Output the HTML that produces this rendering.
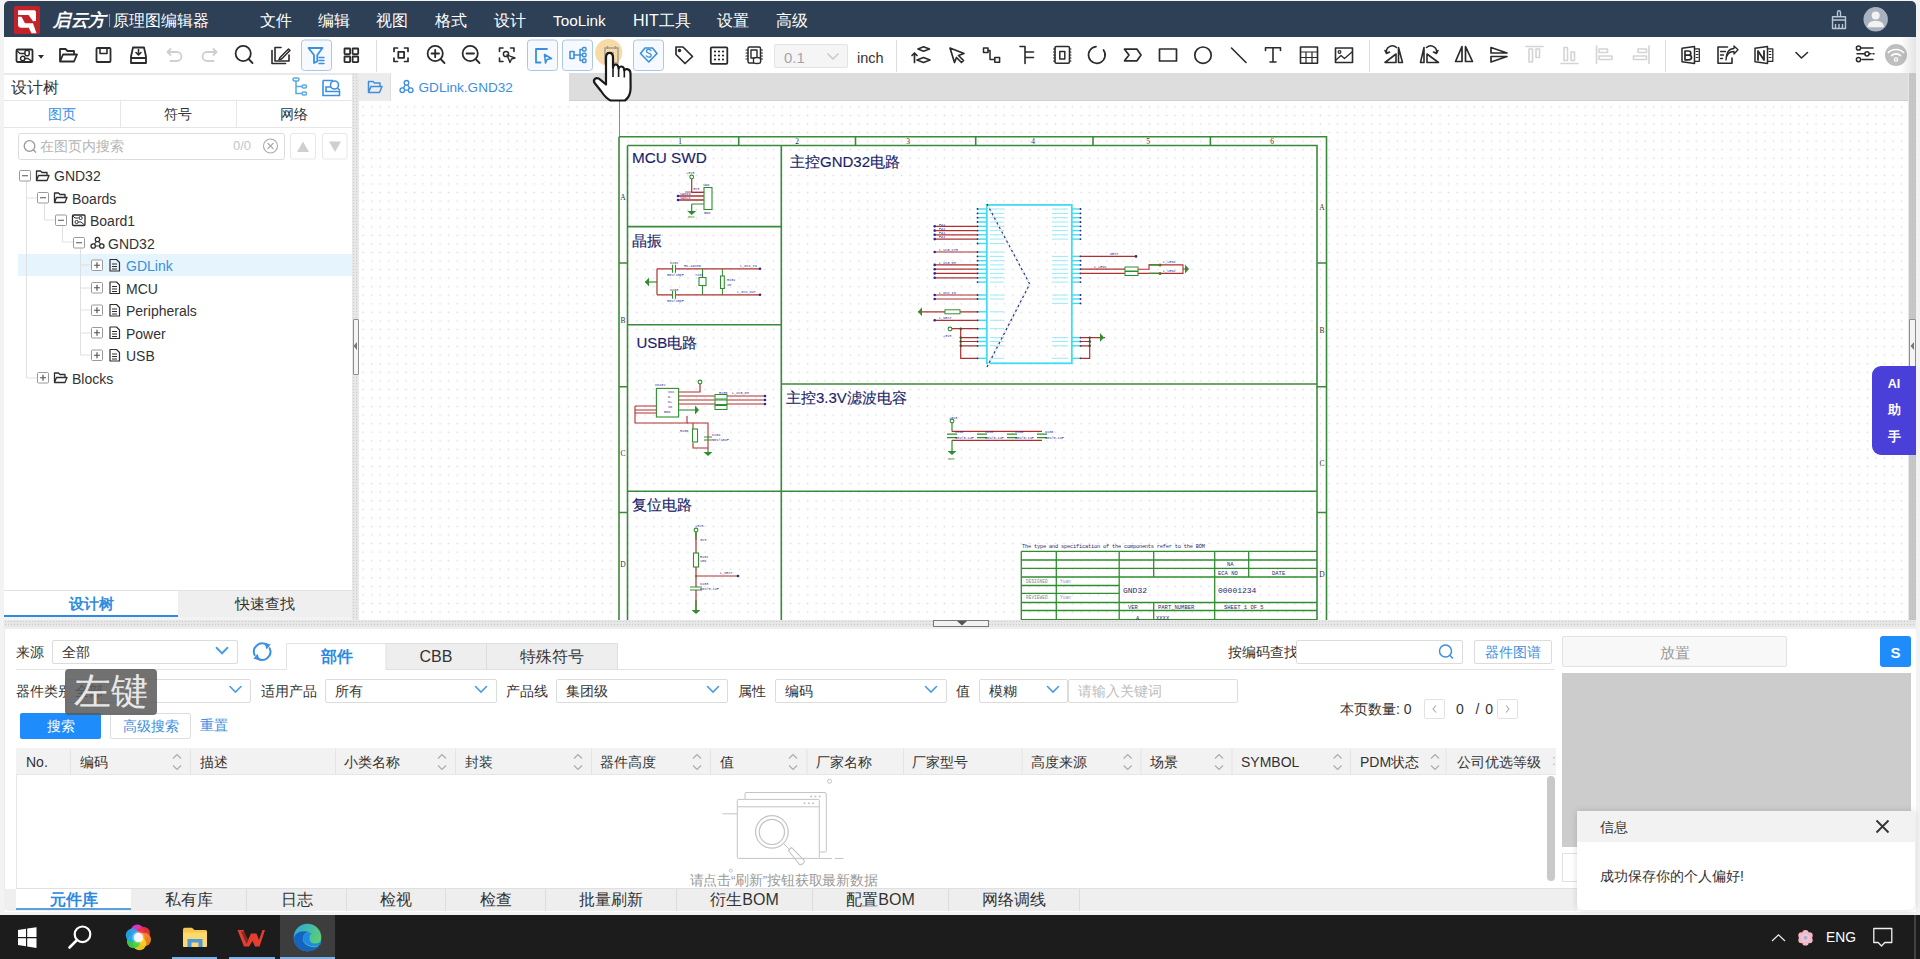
<!DOCTYPE html>
<html><head><meta charset="utf-8">
<style>
*{box-sizing:border-box;margin:0;padding:0}
html,body{width:1920px;height:959px;overflow:hidden;background:#f3f3f3;font-family:"Liberation Sans",sans-serif;color:#333;font-size:14px}
.a{position:absolute}
svg{display:block}
#hdr{left:4px;top:1px;width:1912px;height:36px;background:#2e4055;border-radius:5px 5px 0 0}
.menu{top:2px;height:36px;line-height:37px;color:#fff;font-size:16px;white-space:nowrap}
#tb{left:4px;top:37px;width:1912px;height:36px;background:#fff}
.ic{top:0;width:36px;height:36px}
.ic svg{position:absolute;left:8px;top:8px}
.sep{top:6px;width:1px;height:26px;background:#ddd}
.act{position:absolute;top:3px;width:30px;height:31px;border:1px solid #7fb2e5;border-radius:3px;background:#f4f9ff}
#lp{left:4px;top:73px;width:348px;height:544px;background:#fff}
.spl{background-color:#e7e7e7;background-image:radial-gradient(#cacaca 0.6px,transparent 0.95px);background-size:3px 3px}
#cv{left:359px;top:101px;width:1549px;height:519px;background-color:#fff;background-image:radial-gradient(circle,#dedede 0.7px,transparent 1.1px);background-size:8.56px 8.57px;background-position:-0.1px 1.6px;overflow:hidden}
#ctab{left:359px;top:73px;width:1549px;height:28px;background:#dddddd;border-bottom:1px solid #cfcfcf}
#bp{left:4px;top:628px;width:1912px;height:284px;background:#fff}
#task{left:0;top:915px;width:1920px;height:44px;background:#1c1c1c}
.t14{font-size:14px;white-space:nowrap}
.tree{font-size:14px;color:#333;white-space:nowrap;height:22px;line-height:22px}
.box{width:11px;height:11px;border:1px solid #888;background:#fff}
.dd{background:#fff;border:1px solid #dcdcdc;border-radius:2px;height:24px;line-height:22px;padding-left:9px;font-size:14px;color:#333}
.th{font-size:14px;color:#333;white-space:nowrap;line-height:29px;top:0}
.btab{top:0;height:22px;line-height:22px;text-align:center;font-size:16px;color:#333;background:#eee;border-right:1px solid #ddd}
</style></head><body>

<!-- HEADER -->
<div id="hdr" class="a"></div>
<svg class="a" style="left:0;top:0" width="50" height="40" viewBox="0 0 50 40">
<rect x="14" y="6" width="26" height="28" rx="1.5" fill="#c42228"/>
<path d="M18 10.3 H34.3 Q36 10.3 36 12.5 V21 L33 21.3 L28.5 15 H18 Z" fill="#fff"/>
<path d="M18 16.8 H21.5 L25 23.3 H33 L36.5 33.2 H31.5 L28.8 27.8 H21.5 Q18 27.8 18 24.5 Z" fill="#fff"/>
</svg>
<div class="a menu" style="left:53px;font-size:17.5px;font-style:italic;font-weight:bold;letter-spacing:-0.5px">启云方</div>
<div class="a" style="left:109px;top:13.5px;width:1px;height:13px;background:#8d99a8"></div>
<div class="a menu" style="left:113px;font-size:16px">原理图编辑器</div>
<div class="a menu" style="left:260px">文件</div>
<div class="a menu" style="left:318px">编辑</div>
<div class="a menu" style="left:376px">视图</div>
<div class="a menu" style="left:435px">格式</div>
<div class="a menu" style="left:494px">设计</div>
<div class="a menu" style="left:553px;font-size:15.3px">TooLink</div>
<div class="a menu" style="left:633px">HIT工具</div>
<div class="a menu" style="left:717px">设置</div>
<div class="a menu" style="left:776px">高级</div>


<!-- header right -->
<svg class="a" style="left:1825px;top:5px" width="70" height="30" viewBox="1825 5 70 30">
<g fill="none" stroke="#b9c6d6" stroke-width="1.4" stroke-linejoin="round">
<path d="M1837.5 16.5 V12.5 Q1837.5 10.8 1839 10.8 Q1840.5 10.8 1840.5 12.5 V16.5"/>
<path d="M1832.5 16.8 H1845.5 V20 H1832.5 Z"/>
<path d="M1832.5 20 V28.5 H1845.5 V20 M1835.5 24 V28.5 M1839 24 V28.5 M1842.5 24 V28.5"/>
</g>
<circle cx="1875.7" cy="19.3" r="12.2" fill="#a9b3bf"/>
<circle cx="1875.7" cy="15.5" r="4" fill="#f2f2f2"/>
<path d="M1867.3 27.3 Q1867.5 20.8 1875.7 20.8 Q1884 20.8 1884 27.3 Z" fill="#f2f2f2"/>
</svg>
<!-- TOOLBAR -->
<div id="tb" class="a"></div>
<svg class="a" style="left:0;top:0" width="1920" height="75" viewBox="0 0 1920 75">
<g fill="none" stroke="#2b2b2b" stroke-width="1.8" stroke-linejoin="round" stroke-linecap="round">
<!-- board -->
<rect x="16.5" y="49.5" width="16" height="12.5" rx="1.2"/>
<path d="M38 55 H44 L41 58.8 Z" fill="#2b2b2b" stroke="none"/>
<path d="M17 51 L20 53.5 H24.5 M25 53 A2.2 2.2 0 1 0 29.2 53 A2.2 2.2 0 1 0 25 53 M20.5 58.5 A2.2 2.2 0 1 0 24.9 58.5 A2.2 2.2 0 1 0 20.5 58.5 M25 58.5 H28 L32 61.5" stroke-width="1.5"/>
<!-- folder -->
<path d="M60 61.5 V49 H65.5 L67.5 51 H74 V54 M60 61.5 L63 54.5 H77 L74 61.5 Z"/>
<!-- save -->
<rect x="96.5" y="48" width="14" height="14" rx="1"/>
<path d="M100 48.5 V53.5 H107 V48.5" stroke-width="1.6"/>
<!-- save to -->
<path d="M133 47.5 H144 L146 56.5 V63 H131 V56.5 Z M131 58 H146"/>
<path d="M138.5 49.5 V54.5 M136 52.5 L138.5 55 L141 52.5" stroke-width="1.6"/>
<!-- undo/redo -->
<path d="M167.5 52 H177 A4.5 4.5 0 0 1 177 61 H170.5 M170.5 49 L167.5 52 L170.5 55" stroke="#cfcfcf"/>
<path d="M216.5 52 H207 A4.5 4.5 0 0 0 207 61 H213.5 M213.5 49 L216.5 52 L213.5 55" stroke="#cfcfcf"/>
<!-- search -->
<circle cx="243.2" cy="53.5" r="7.6"/><path d="M248.6 59 L252.5 63"/>
<!-- edit -->
<path d="M272 50.5 V63.5 H285.5" stroke-width="1.6"/>
<path d="M281 47.5 H275 V61 H289 V55" stroke-width="1.6"/>
<path d="M280 57.5 L288.5 49 L290 50.5 L281.5 59 L279 59.5 Z" stroke-width="1.5"/>
<!-- grid -->
<rect x="344.5" y="48.5" width="5.6" height="5.6" rx=".5"/><rect x="352.6" y="48.5" width="5.6" height="5.6" rx=".5"/>
<rect x="344.5" y="56.5" width="5.6" height="5.6" rx=".5"/><rect x="352.6" y="56.5" width="5.6" height="5.6" rx=".5"/>
<!-- fit -->
<path d="M394 51.5 V48 H397.5 M404.5 48 H408 V51.5 M408 58 V61.5 H404.5 M397.5 61.5 H394 V58" stroke-width="1.7"/>
<rect x="398.3" y="51.8" width="5.8" height="6"/>
<!-- zoom in -->
<circle cx="435.2" cy="53.5" r="7.6"/><path d="M440.6 59 L444.5 63 M431.5 53.5 H439 M435.2 49.8 V57.2"/>
<!-- zoom out -->
<circle cx="470.2" cy="53.5" r="7.6"/><path d="M475.6 59 L479.5 63 M466.5 53.5 H474"/>
<!-- zoom select -->
<path d="M499.5 51.5 V48 H503 M510.5 48 H514 V51.5 M499.5 58 V61.5 H503" stroke-width="1.6"/>
<circle cx="506" cy="54" r="2.6" stroke-width="1.5"/><path d="M507 55 L515 58 L511.5 59 L510 62.5 Z" stroke-width="1.4"/>
<!-- tag -->
<path d="M676 47 H683 L692.5 56.5 L685 63.5 L676 54.5 Z" stroke-width="1.7"/><circle cx="679.5" cy="50.5" r=".9" fill="#2b2b2b"/>
<!-- dots grid -->
<rect x="710.8" y="47.3" width="16.5" height="16.5" rx="1"/>
<g fill="#2b2b2b" stroke="none"><circle cx="715" cy="51.5" r="1.1"/><circle cx="719" cy="51.5" r="1.1"/><circle cx="723" cy="51.5" r="1.1"/><circle cx="715" cy="55.5" r="1.1"/><circle cx="719" cy="55.5" r="1.1"/><circle cx="723" cy="55.5" r="1.1"/><circle cx="715" cy="59.5" r="1.1"/><circle cx="719" cy="59.5" r="1.1"/><circle cx="723" cy="59.5" r="1.1"/></g>
<!-- chip db -->
<rect x="748" y="47" width="12.5" height="16" rx="1.5" stroke-width="1.5"/>
<path d="M746 50 H748 M746 53 H748 M746 56 H748 M746 59 H748 M760.5 50 H762.5 M760.5 53 H762.5 M760.5 56 H762.5 M760.5 59 H762.5" stroke-width="1.2"/>
<rect x="751" y="50" width="6" height="8" stroke-width="1.4"/>
<ellipse cx="757" cy="59" rx="3.5" ry="1.5" fill="#fff" stroke-width="1.3"/><path d="M753.5 59 V62 A3.5 1.5 0 0 0 760.5 62 V59" fill="#fff" stroke-width="1.3"/>
<!-- layers -->
<path d="M914.5 62.5 V53 M912 55.5 L914.5 53 L917 55.5" stroke-width="1.7"/>
<path d="M918 49 L923.5 46.8 L929.5 49 L923.5 51.2 Z M917 60 L923.5 57.5 L930 60 L923.5 62.5 Z" stroke-width="1.7"/>
<!-- arrow -->
<path d="M950 48 L964 53.5 L958.5 55.5 L963.5 60.5 L961.5 62.5 L956.5 57.5 L954.5 62.5 Z" stroke-width="1.7"/>
<!-- wire -->
<rect x="983.5" y="48" width="4.5" height="4.5" stroke-width="1.5"/><rect x="994.8" y="57.5" width="4.8" height="4.8" stroke-width="1.5"/>
<path d="M988 50.5 H990 V59.5 H994.5" stroke-width="1.5"/>
<!-- bus entry -->
<path d="M1020 46.5 H1025 V63.5 M1025 52 H1033.5 M1025 57.5 H1033.5" stroke-width="1.6"/>
<!-- chip -->
<rect x="1055" y="46.5" width="14.5" height="16.8" rx="1.5" stroke-width="1.6"/>
<rect x="1059.8" y="51.5" width="5" height="7.5" stroke-width="1.5"/>
<path d="M1053.5 49 H1055 M1053.5 52 H1055 M1053.5 55 H1055 M1053.5 58 H1055 M1053.5 61 H1055 M1069.5 49 H1071 M1069.5 52 H1071 M1069.5 55 H1071 M1069.5 58 H1071 M1069.5 61 H1071" stroke-width="1.1"/>
<!-- arc -->
<path d="M1103.5 50 A8.3 8.3 0 1 1 1096 46.7" stroke-width="1.7"/>
<!-- net port -->
<path d="M1124.5 49.2 H1137 L1141 55 L1137 60.8 H1124.5 L1129 55 Z" stroke-width="1.7"/>
<!-- rect -->
<rect x="1159.5" y="49" width="17" height="12" stroke-width="1.7"/>
<!-- circle -->
<circle cx="1203" cy="55.2" r="8.2" stroke-width="1.7"/>
<!-- line -->
<path d="M1231.5 48 L1246 62.5" stroke-width="1.6"/>
<!-- T -->
<path d="M1265.5 50.5 V47.8 H1280.5 V50.5 M1273 47.8 V62 M1270 62 H1276" stroke-width="1.6"/>
<!-- table -->
<rect x="1300.5" y="47" width="17" height="16.3" stroke-width="1.6"/>
<path d="M1300.5 52 H1317.5 M1300.5 57.5 H1317.5 M1306 52 V63.3 M1312 52 V63.3" stroke-width="1.2"/>
<!-- image -->
<rect x="1335.5" y="48" width="17" height="14.5" stroke-width="1.6"/>
<circle cx="1339.5" cy="52" r="1.4" stroke-width="1.2"/><path d="M1336 60 L1341 55.5 L1344.5 58.5 L1352 52" stroke-width="1.3"/>
<!-- rotate L -->
<path d="M1385 62.5 L1396 54 V62.5 Z M1398.5 47.5 L1402.5 62.5 H1398.5 Z" stroke-width="1.6"/>
<path d="M1396.5 47.5 A6 6 0 0 0 1386.5 53 M1385 50.5 L1386.5 53.5 L1389.5 52" stroke-width="1.6"/>
<!-- rotate R -->
<path d="M1424 47.5 L1420.5 62.5 H1424 Z M1427 54 L1438.5 62.5 H1427 Z" stroke-width="1.6"/>
<path d="M1426.5 47.5 A6 6 0 0 1 1436.5 53 M1438 50.5 L1436.5 53.5 L1433.5 52" stroke-width="1.6"/>
<!-- flip H -->
<path d="M1462 46.5 L1455.5 61.5 H1462 Z M1465.5 46.5 L1472.5 61.5 H1465.5 Z" stroke-width="1.7"/>
<!-- flip V -->
<path d="M1491 47.5 L1507 53 H1491 Z M1491 56.5 H1507 L1491 62 Z" stroke-width="1.7"/>
<!-- disabled aligns -->
<g stroke="#d4d4d4" stroke-width="1.6">
<path d="M1526 46.5 H1543"/><rect x="1529" y="49" width="3.5" height="13"/><rect x="1536" y="49" width="3.5" height="8.5"/>
<path d="M1561 63.5 H1578"/><rect x="1564" y="47.5" width="3.5" height="13"/><rect x="1571" y="52" width="3.5" height="8.5"/>
<path d="M1596.5 46 V63.5"/><rect x="1599" y="49" width="8.5" height="3.5"/><rect x="1599" y="56" width="13" height="3.5"/>
<path d="M1649 46 V63.5"/><rect x="1638" y="49" width="8.5" height="3.5"/><rect x="1633.5" y="56" width="13" height="3.5"/>
</g>
<!-- B book -->
<path d="M1682 48.3 L1694.5 46.5 V63.5 L1682 61.8 Z" stroke-width="1.5"/><path d="M1694.5 48.8 H1699.3 V61.3 H1694.5" stroke-width="1.3"/>
<path d="M1696.2 51.5 H1698 M1696.2 54.5 H1698 M1696.2 57.5 H1698" stroke-width="1"/>
<path d="M1685 51 H1688.5 Q1690.8 51 1690.8 53.2 Q1690.8 55.2 1688.5 55.2 H1685 M1688.5 55.2 Q1691.5 55.2 1691.5 57.5 Q1691.5 59.8 1688.5 59.8 H1685 V51" stroke-width="1.7"/>
<!-- export -->
<path d="M1727.5 47 H1718 V63.3 H1732 V58" stroke-width="1.6"/><path d="M1720.5 51.5 H1725.5 M1720.5 55 H1723.5 M1720.5 58.5 H1722.5" stroke-width="1.4"/>
<path d="M1726 60 C1726.5 54 1729.5 51.5 1734 51.5 V54 L1738 49.8 L1734 46 V48.5 C1729.5 48.5 1726.3 52.5 1726 60" stroke-width="1.3"/>
<!-- N book -->
<path d="M1755 48.3 L1767.5 46.5 V63.5 L1755 61.8 Z" stroke-width="1.5"/><path d="M1767.5 48.8 H1772.8 V61.3 H1767.5" stroke-width="1.3"/>
<path d="M1769.2 51.5 H1771 M1769.2 54.5 H1771 M1769.2 57.5 H1771" stroke-width="1"/>
<path d="M1758 60 V51 L1764 60 V51" stroke-width="1.8"/>
<!-- chevron -->
<path d="M1796 52.5 L1801.5 58 L1807.5 52.5" stroke-width="1.6"/>
<!-- sliders -->
<path d="M1860.5 48 H1873 M1857 53.8 H1871 M1862 59.6 H1873 M1873 53.8 H1874" stroke-width="1.5"/>
<circle cx="1858.5" cy="48" r="2.1" fill="#fff" stroke-width="1.5"/><circle cx="1867" cy="53.8" r="2.1" fill="#fff" stroke-width="1.5"/><circle cx="1858.5" cy="59.6" r="2.1" fill="#fff" stroke-width="1.5"/>
</g>
<!-- separators -->
<g fill="#dedede"><rect x="376" y="40" width="1" height="32"/><rect x="896" y="40" width="1" height="32"/><rect x="1369" y="40" width="1" height="32"/><rect x="1665" y="40" width="1" height="32"/></g>
<!-- bold letters in books -->

<!-- active boxes -->
<g fill="#f6faff" stroke="#a9c7e8" stroke-width="1">
<rect x="301.5" y="40" width="30" height="30.5" rx="3"/>
<rect x="527.5" y="40" width="30" height="30.5" rx="3"/>
<rect x="562.5" y="40" width="30" height="30.5" rx="3"/>
<rect x="633.5" y="40" width="30" height="30.5" rx="3"/>
</g>
<g fill="none" stroke="#3a8fde" stroke-width="1.8" stroke-linejoin="round" stroke-linecap="round">
<path d="M308.5 48 H322.5 L317.3 55 V61.5 L314 63 V55 Z"/>
<path d="M319 57.5 H324 M319 60.5 H324 M319 63.5 H324" stroke-width="1.4"/>
<path d="M547 49 H536 V62.5 H540.5" />
<path d="M544.5 54.5 L551.5 58.5 L547 59.5 L545.5 63 Z" stroke-width="1.6"/>
<rect x="570" y="51.5" width="4" height="7" stroke-width="1.6"/>
<path d="M574 55 H580 M580 49.5 V60.5 M580 49.5 H582.5 M580 55 H582.5 M580 60.5 H582.5" stroke-width="1.5"/>
<rect x="582.5" y="47.5" width="3.5" height="3.5" rx="1" stroke-width="1.4"/><rect x="582.5" y="53.3" width="3.5" height="3.5" rx="1" stroke-width="1.4"/><rect x="582.5" y="59" width="3.5" height="3.5" rx="1" stroke-width="1.4"/>
<path d="M640.5 53.5 L645 48 H652.5 L657 53.5 L648.8 62 Z" stroke-width="1.6"/>
</g>
<path d="M651 50.6 Q650.3 49.4 648.7 49.4 Q646.5 49.4 646.5 51.2 Q646.5 52.6 648.7 53.1 Q651.2 53.7 651.2 55.3 Q651.2 57.2 648.8 57.2 Q646.9 57.2 646.3 55.8" fill="none" stroke="#3a8fde" stroke-width="1.3" stroke-linecap="round"/>
<!-- yellow highlight -->
<circle cx="608.7" cy="52.5" r="13.6" fill="#f6d69c" opacity="0.9"/>
<g fill="none" stroke="#9b9b9b" stroke-width="1.4"><rect x="605" y="48" width="13" height="15"/><path d="M607.5 46 V49 M615.5 46 V49 M609 53 H614 M609 56 H614 M609 59 H614"/></g>
<!-- wifi circle -->
<circle cx="1896" cy="55" r="11" fill="#bfbfbf"/>
<g fill="none" stroke="#fff" stroke-width="1.6"><path d="M1888 53 A11 11 0 0 1 1904 53"/><path d="M1891 56 A7 7 0 0 1 1901 56"/></g><circle cx="1896" cy="59.5" r="1.6" fill="none" stroke="#fff" stroke-width="1.2"/>
</svg>
<!-- dropdown 0.1 -->
<div class="a" style="left:774px;top:44px;width:74px;height:24px;background:#f5f5f5;border:1px solid #e3e3e3;border-radius:2px"></div>
<div class="a" style="left:784px;top:46.5px;font-size:15px;line-height:22px;color:#a5a5a5">0.1</div>
<svg class="a" style="left:826px;top:52px" width="14" height="10"><path d="M1.5 1.5 L7 7 L12.5 1.5" fill="none" stroke="#c8c8c8" stroke-width="1.4"/></svg>
<div class="a" style="left:857px;top:47.5px;font-size:14.5px;line-height:20px;color:#333">inch</div>


<!-- LEFT PANEL -->
<div id="lp" class="a"></div>
<div class="a spl" style="left:352px;top:73px;width:7px;height:547px"></div>
<div class="a" style="left:4px;top:73px;width:348px;height:1.5px;background:#e9e9e9"></div>
<div class="a" style="left:11px;top:74.5px;font-size:16px;line-height:26px;color:#333">设计树</div>
<div class="a" style="left:4px;top:100px;width:348px;height:1px;background:#e6e6e6"></div>
<div class="a" style="left:4px;top:127px;width:348px;height:1px;background:#e6e6e6"></div>
<div class="a" style="left:120px;top:101px;width:1px;height:26px;background:#e6e6e6"></div>
<div class="a" style="left:236px;top:101px;width:1px;height:26px;background:#e6e6e6"></div>
<div class="a" style="left:4px;top:101px;width:116px;text-align:center;font-size:14px;line-height:26px;color:#3a8ee6">图页</div>
<div class="a" style="left:120px;top:101px;width:116px;text-align:center;font-size:14px;line-height:26px;color:#333">符号</div>
<div class="a" style="left:236px;top:101px;width:116px;text-align:center;font-size:14px;line-height:26px;color:#333">网络</div>
<svg class="a" style="left:0;top:70px" width="352" height="100" viewBox="0 70 352 100">
<g fill="none" stroke="#5aaae0" stroke-width="1.5">
<path d="M296 81 V93.5 H302 M296 86.5 H302"/>
<rect x="293" y="78" width="6" height="3" rx="1.5"/><rect x="302" y="85" width="4.5" height="3" rx="1.5"/><rect x="302" y="92" width="4.5" height="3" rx="1.5"/>
</g>
<g fill="none" stroke="#3e8fe0" stroke-width="1.6">
<path d="M323 80.5 H333 M323 80.5 V95.5 H339.5 V91.5 H326 V87 H331"/>
<circle cx="334.5" cy="85" r="4"/><path d="M337.5 88 L340 90.5"/>
</g>
<rect x="18.5" y="133.5" width="266" height="26" rx="2" fill="#fff" stroke="#dcdcdc"/>
<rect x="290.5" y="133.5" width="25" height="25.5" rx="2" fill="#fff" stroke="#e6e6e6"/>
<rect x="322.5" y="133.5" width="24.5" height="25.5" rx="2" fill="#fff" stroke="#e6e6e6"/>
<path d="M297 152 L303 141.5 L309 152 Z" fill="#cfcfcf"/>
<path d="M329 141.5 H341 L335 152 Z" fill="#cfcfcf"/>
<g fill="none" stroke="#999" stroke-width="1.3"><circle cx="29.5" cy="146" r="5.3"/><path d="M33.3 149.8 L36 152.5"/></g>
<g fill="none" stroke="#aaa" stroke-width="1.1"><circle cx="270.5" cy="146" r="7"/><path d="M267.5 143 L273.5 149 M273.5 143 L267.5 149"/></g>
</svg>
<div class="a" style="left:40px;top:134px;font-size:14px;line-height:24px;color:#b5b5b5">在图页内搜索</div>
<div class="a" style="left:233px;top:134px;font-size:13px;line-height:24px;color:#c5c5c5">0/0</div>
<!-- tree -->
<div class="a" style="left:18px;top:254px;width:334px;height:22px;background:#e6f4fd"></div>
<svg class="a" style="left:0;top:160px" width="352" height="230" viewBox="0 160 352 230">
<g fill="none" stroke="#e0e0e0" stroke-width="1">
<path d="M26.5 181 V378 H37 M26.5 198 H37 M44.5 204 V220 H55 M62.5 226 V242 H73 M80.5 249 V355 H91 M80.5 265 H91 M80.5 288 H91 M80.5 310 H91 M80.5 333 H91"/>
</g>
<g fill="#fff" stroke="#9a9a9a" stroke-width="1">
<rect x="19.5" y="170.5" width="11" height="10.5" rx="1"/>
<rect x="37.5" y="192.5" width="11" height="10.5" rx="1"/>
<rect x="55.5" y="215" width="11" height="10.5" rx="1"/>
<rect x="73.5" y="237.5" width="11" height="10.5" rx="1"/>
<rect x="91.5" y="260" width="11" height="10.5" rx="1"/>
<rect x="91.5" y="282.5" width="11" height="10.5" rx="1"/>
<rect x="91.5" y="305" width="11" height="10.5" rx="1"/>
<rect x="91.5" y="327.5" width="11" height="10.5" rx="1"/>
<rect x="91.5" y="350" width="11" height="10.5" rx="1"/>
<rect x="37.5" y="372.5" width="11" height="10.5" rx="1"/>
</g>
<g fill="none" stroke="#555" stroke-width="1.2">
<path d="M22 175.75 H28 M40 197.75 H46 M58 220.25 H64 M76 242.75 H82"/>
<path d="M94 265.25 H100 M97 262.25 V268.25 M94 287.75 H100 M97 284.75 V290.75 M94 310.25 H100 M97 307.25 V313.25 M94 332.75 H100 M97 329.75 V335.75 M94 355.25 H100 M97 352.25 V358.25 M40 377.75 H46 M43 374.75 V380.75"/>
</g>
<g fill="none" stroke="#2e2e2e" stroke-width="1.3" stroke-linejoin="round">
<path d="M36.5 180.5 V171 H40.5 L42 172.5 H47 V175 M36.5 180.5 L38.5 175.5 H49 L47 180.5 Z"/>
<path d="M54.5 202.5 V193 H58.5 L60 194.5 H65 V197 M54.5 202.5 L56.5 197.5 H67 L65 202.5 Z"/>
<path d="M54.5 382.5 V373 H58.5 L60 374.5 H65 V377 M54.5 382.5 L56.5 377.5 H67 L65 382.5 Z"/>
<rect x="72.5" y="215" width="12.5" height="10.5" rx="1"/>
<path d="M73 216 L75 218 H78.5 M79 218 A1.6 1.6 0 1 0 82.2 218 A1.6 1.6 0 1 0 79 218 M75 222 A1.6 1.6 0 1 0 78.2 222 A1.6 1.6 0 1 0 75 222 M78.2 222 H81 L84.5 225" stroke-width="1"/>
<circle cx="97.5" cy="239.5" r="2.2"/><circle cx="93.2" cy="246" r="2.2"/><circle cx="101.8" cy="246" r="2.2"/>
<path d="M96.5 241.5 L94.5 244 M98.5 241.5 L100.5 244 M95.4 246 H99.6" stroke-width="1.1"/>
</g>
<g fill="none" stroke="#2e2e2e" stroke-width="1.2" stroke-linejoin="round">
<path d="M110 259.5 H116.5 L119.5 262.5 V271 H110 Z M112 264 H117 M112 266.5 H117 M112 269 H117"/>
<path d="M110 282 H116.5 L119.5 285 V293.5 H110 Z M112 286.5 H117 M112 289 H117 M112 291.5 H117"/>
<path d="M110 304.5 H116.5 L119.5 307.5 V316 H110 Z M112 309 H117 M112 311.5 H117 M112 314 H117"/>
<path d="M110 327 H116.5 L119.5 330 V338.5 H110 Z M112 331.5 H117 M112 334 H117 M112 336.5 H117"/>
<path d="M110 349.5 H116.5 L119.5 352.5 V361 H110 Z M112 354 H117 M112 356.5 H117 M112 359 H117"/>
</g>
</svg>
<div class="a tree" style="left:54px;top:165px">GND32</div>
<div class="a tree" style="left:72px;top:187.5px">Boards</div>
<div class="a tree" style="left:90px;top:210px">Board1</div>
<div class="a tree" style="left:108px;top:232.5px">GND32</div>
<div class="a tree" style="left:126px;top:255px;color:#3b8fd9">GDLink</div>
<div class="a tree" style="left:126px;top:277.5px">MCU</div>
<div class="a tree" style="left:126px;top:300px">Peripherals</div>
<div class="a tree" style="left:126px;top:322.5px">Power</div>
<div class="a tree" style="left:126px;top:345px">USB</div>
<div class="a tree" style="left:72px;top:367.5px">Blocks</div>
<!-- left bottom tabs -->
<div class="a" style="left:4px;top:590px;width:348px;height:1px;background:#e2e2e2"></div>
<div class="a" style="left:178px;top:591px;width:174px;height:26px;background:#efefef"></div>
<div class="a" style="left:4px;top:591px;width:174px;text-align:center;font-size:15px;line-height:25px;color:#2f8be0;font-weight:bold">设计树</div>
<div class="a" style="left:178px;top:591px;width:174px;text-align:center;font-size:15px;line-height:25px;color:#333">快速查找</div>
<div class="a" style="left:4px;top:614.5px;width:174px;height:2.5px;background:#2f8be0"></div>
<!-- vertical splitter handle -->
<div class="a" style="left:352.5px;top:318.5px;width:6.5px;height:56.5px;background:#f4f4f4;border:1px solid #8c8c8c;border-radius:1px"></div>
<svg class="a" style="left:352px;top:340px" width="7" height="12"><path d="M5 2 L1.5 6 L5 10 Z" fill="#777"/></svg>


<!-- CANVAS -->
<div id="ctab" class="a"></div>
<div id="cv" class="a"></div>

<div class="a" style="left:359px;top:73px;width:31px;height:28px;background:#ececec"></div>
<div class="a" style="left:390px;top:73px;width:179px;height:28px;background:#fff;border-left:1px solid #e0e0e0"></div>
<svg class="a" style="left:359px;top:73px" width="210" height="28" viewBox="359 73 210 28">
<path d="M368.5 92.5 V81.5 H373 L374.5 83 H380 V86 M368.5 92.5 L371 86.5 H382 L379.5 92.5 Z" fill="none" stroke="#3d8ee0" stroke-width="1.5" stroke-linejoin="round"/>
<g fill="none" stroke="#3d8ee0" stroke-width="1.3"><circle cx="406.5" cy="82.8" r="2.3"/><circle cx="402.3" cy="90.2" r="2.3"/><circle cx="410.7" cy="90.2" r="2.3"/><path d="M405.4 84.8 L403.4 88.2 M407.6 84.8 L409.6 88.2 M404.6 90.2 H408.4"/></g>
</svg>
<div class="a" style="left:418.5px;top:74.5px;font-size:13.6px;line-height:26px;color:#3d8ee0">GDLink.GND32</div>
<svg class="a" style="left:359px;top:101px" width="1549" height="519" viewBox="359 101 1549 519">
<path d="M619.5 101 V136.5" stroke="#8c8c8c" stroke-width="1"/>
<g fill="none" stroke="#3b8a3b" stroke-width="1.6">
<path d="M619 136.7 H1326.5 V640 M619 136.7 V640"/>
<path d="M627.5 145.5 H1317 V640 M627.5 145.5 V640"/>
<path d="M738.7 136.7 V145.5"/>
<path d="M855.5 136.7 V145.5"/>
<path d="M975.7 136.7 V145.5"/>
<path d="M1093 136.7 V145.5"/>
<path d="M1210.4 136.7 V145.5"/>
<path d="M619 263 H627.5 M1317 263 H1326.5"/>
<path d="M619 386.8 H627.5 M1317 386.8 H1326.5"/>
<path d="M619 512.5 H627.5 M1317 512.5 H1326.5"/>
<path d="M781.3 145.5 V640 M627.5 226.6 H781.3 M627.5 324.8 H781.3 M627.5 491.3 H1317 M781.3 384 H1317"/>
</g>
<text x="680" y="144" font-family="Liberation Serif" font-size="7.5" fill="#333" text-anchor="middle">1</text>
<text x="797" y="144" font-family="Liberation Serif" font-size="7.5" fill="#333" text-anchor="middle">2</text>
<text x="908" y="144" font-family="Liberation Serif" font-size="7.5" fill="#333" text-anchor="middle">3</text>
<text x="1033" y="144" font-family="Liberation Serif" font-size="7.5" fill="#333" text-anchor="middle">4</text>
<text x="1148" y="144" font-family="Liberation Serif" font-size="7.5" fill="#333" text-anchor="middle">5</text>
<text x="1272" y="144" font-family="Liberation Serif" font-size="7.5" fill="#333" text-anchor="middle">6</text>
<text x="623" y="200" font-family="Liberation Serif" font-size="7.5" fill="#333" text-anchor="middle">A</text>
<text x="1322" y="210" font-family="Liberation Serif" font-size="7.5" fill="#333" text-anchor="middle">A</text>
<text x="623" y="323" font-family="Liberation Serif" font-size="7.5" fill="#333" text-anchor="middle">B</text>
<text x="1322" y="333" font-family="Liberation Serif" font-size="7.5" fill="#333" text-anchor="middle">B</text>
<text x="623" y="456" font-family="Liberation Serif" font-size="7.5" fill="#333" text-anchor="middle">C</text>
<text x="1322" y="466" font-family="Liberation Serif" font-size="7.5" fill="#333" text-anchor="middle">C</text>
<text x="623" y="567" font-family="Liberation Serif" font-size="7.5" fill="#333" text-anchor="middle">D</text>
<text x="1322" y="577" font-family="Liberation Serif" font-size="7.5" fill="#333" text-anchor="middle">D</text>
<text x="632" y="163.3" font-family="Liberation Sans" fill="#1b1f6b" stroke="#1b1f6b" stroke-width="0.15" font-size="15.3">MCU SWD</text>
<text x="632" y="245.5" font-family="Liberation Sans" fill="#1b1f6b" stroke="#1b1f6b" stroke-width="0.15" font-size="15">晶振</text>
<text x="636.5" y="347.5" font-family="Liberation Sans" fill="#1b1f6b" stroke="#1b1f6b" stroke-width="0.15" font-size="15">USB电路</text>
<text x="631.5" y="510" font-family="Liberation Sans" fill="#1b1f6b" stroke="#1b1f6b" stroke-width="0.15" font-size="15">复位电路</text>
<text x="790" y="167" font-family="Liberation Sans" fill="#1b1f6b" stroke="#1b1f6b" stroke-width="0.15" font-size="15">主控GND32电路</text>
<text x="786" y="402.5" font-family="Liberation Sans" fill="#1b1f6b" stroke="#1b1f6b" stroke-width="0.15" font-size="15">主控3.3V滤波电容</text>
</svg>
<div class="a" style="left:1900px;top:37px;width:16px;height:36px;background:linear-gradient(to right,rgba(0,0,0,0),rgba(0,0,0,0.11))"></div>
<div class="a" style="left:1907.5px;top:73px;width:8.5px;height:547px;background-color:#c9c9c9;background-image:radial-gradient(#b9b9b9 0.6px,transparent 0.9px);background-size:2.5px 2.5px;border-left:1.5px solid #e6e6e6"></div>
<div class="a spl" style="left:4px;top:620px;width:1912px;height:8px"></div>

<!-- BOTTOM PANEL -->
<svg class="a" style="left:359px;top:101px" width="1549" height="519" viewBox="359 101 1549 519">
<circle cx="691.7" cy="177" r="1.9" fill="#fff" stroke="#2f8f2f" stroke-width="1.1"/>
<path d="M691.7 179 V192.5 H704" fill="none" stroke="#b03030" stroke-width="1.2"/>
<path d="M678 196 H704 M678 200 H704" fill="none" stroke="#b03030" stroke-width="1.3"/>
<path d="M685 192 H704" fill="none" stroke="#b03030" stroke-width="0.8"/>
<circle cx="678" cy="196" r="1.3" fill="#2a2a9a"/>
<circle cx="678" cy="200" r="1.3" fill="#2a2a9a"/>
<path d="M691.7 204 H704 M691.7 204 V211" fill="none" stroke="#2f8f2f" stroke-width="1.2"/>
<path d="M687.2 211 H696.2 L691.7 215 Z" fill="#2f8f2f"/>
<rect x="704" y="187.5" width="8" height="22" fill="none" stroke="#2f8f2f" stroke-width="1.1"/>
<text x="686" y="174" font-family="Liberation Mono" font-size="3.5" fill="#2a2a9a">+3V3</text>
<text x="703" y="186" font-family="Liberation Mono" font-size="3.5" fill="#2a2a9a">SWD</text>
<text x="704" y="214" font-family="Liberation Mono" font-size="3.5" fill="#2a2a9a">GND</text>
<text x="688" y="218" font-family="Liberation Mono" font-size="3.5" fill="#2f8f2f">GND</text>
<text x="693" y="190" font-family="Liberation Mono" font-size="3.5" fill="#2a2a9a">3V3</text>
<text x="680" y="195" font-family="Liberation Mono" font-size="3.5" fill="#2a2a9a">SWDIO</text>
<text x="680" y="199" font-family="Liberation Mono" font-size="3.5" fill="#2a2a9a">SWCLK</text>
<path d="M657 268.8 H760 M657 294.8 H760 M657 268.8 V294.8" fill="none" stroke="#b03030" stroke-width="1.2"/>
<path d="M645 282 H657" fill="none" stroke="#2f8f2f" stroke-width="1.2"/>
<path d="M649 277.5 V286.5 L645 282 Z" fill="#2f8f2f"/>
<rect x="672" y="264.8" width="4" height="8" fill="#fff"/>
<path d="M672.5 264.8 V272.8 M675.5 264.8 V272.8" fill="none" stroke="#2f8f2f" stroke-width="1.1"/>
<rect x="672" y="290.8" width="4" height="8" fill="#fff"/>
<path d="M672.5 290.8 V298.8 M675.5 290.8 V298.8" fill="none" stroke="#2f8f2f" stroke-width="1.1"/>
<rect x="699" y="277.5" width="7" height="8" fill="#fff" stroke="#2f8f2f" stroke-width="1.1"/>
<path d="M702.5 268.8 V277.5 M702.5 285.5 V294.8" fill="none" stroke="#2f8f2f" stroke-width="1"/>
<rect x="720.5" y="276" width="3.8" height="12.5" fill="#fff" stroke="#2f8f2f" stroke-width="1.1"/>
<path d="M722.4 268.8 V276 M722.4 288.5 V294.8" fill="none" stroke="#2f8f2f" stroke-width="1"/>
<circle cx="760" cy="268.8" r="1.3" fill="#2a2a9a"/>
<circle cx="760" cy="294.8" r="1.3" fill="#2a2a9a"/>
<text x="670" y="264" font-family="Liberation Mono" font-size="3.5" fill="#2a2a9a">C102</text>
<text x="684" y="266.5" font-family="Liberation Mono" font-size="3.5" fill="#2a2a9a">HC-49SMD</text>
<text x="740" y="266.5" font-family="Liberation Mono" font-size="3.5" fill="#2a2a9a">L_OSC_IN</text>
<text x="667" y="276" font-family="Liberation Mono" font-size="3.5" fill="#2a2a9a">50V/20pF</text>
<text x="695" y="276" font-family="Liberation Mono" font-size="3.5" fill="#2a2a9a">Y101</text>
<text x="727" y="281" font-family="Liberation Mono" font-size="3.5" fill="#2a2a9a">R101</text>
<text x="727" y="286" font-family="Liberation Mono" font-size="3.5" fill="#2a2a9a">1M</text>
<text x="670" y="291" font-family="Liberation Mono" font-size="3.5" fill="#2a2a9a">C103</text>
<text x="667" y="302" font-family="Liberation Mono" font-size="3.5" fill="#2a2a9a">50V/20pF</text>
<text x="737" y="293" font-family="Liberation Mono" font-size="3.5" fill="#2a2a9a">L_OSC_OUT</text>
<rect x="656.4" y="388.4" width="22.2" height="28.6" fill="#fff" stroke="#2f8f2f" stroke-width="1.1"/>
<text x="655" y="386" font-family="Liberation Mono" font-size="3.5" fill="#2a2a9a">CN102</text>
<text x="668" y="393" font-family="Liberation Mono" font-size="3.5" fill="#2a2a9a">VCC</text>
<text x="668" y="398" font-family="Liberation Mono" font-size="3.5" fill="#2a2a9a">D-</text>
<text x="668" y="403" font-family="Liberation Mono" font-size="3.5" fill="#2a2a9a">D+</text>
<text x="668" y="408" font-family="Liberation Mono" font-size="3.5" fill="#2a2a9a">ID</text>
<text x="664" y="413" font-family="Liberation Mono" font-size="3.5" fill="#2a2a9a">GND</text>
<circle cx="700" cy="382" r="1.9" fill="#fff" stroke="#2f8f2f" stroke-width="1.1"/>
<path d="M700 384 V392 H678.6" fill="none" stroke="#b03030" stroke-width="1.2"/>
<path d="M678.6 396 H715 M678.6 400 H715 M678.6 404 H715" fill="none" stroke="#b03030" stroke-width="1.2"/>
<rect x="715" y="394.5" width="12" height="4.5" fill="#fff" stroke="#2f8f2f" stroke-width="1"/>
<rect x="715" y="400" width="12" height="4.5" fill="#fff" stroke="#2f8f2f" stroke-width="1"/>
<rect x="715" y="405.5" width="12" height="4" fill="#fff" stroke="#2f8f2f" stroke-width="1"/>
<path d="M727 396 H765 M727 400 H765 M727 404 H765" fill="none" stroke="#b03030" stroke-width="1.2"/>
<circle cx="765" cy="396" r="1.3" fill="#2a2a9a"/>
<circle cx="765" cy="400" r="1.3" fill="#2a2a9a"/>
<circle cx="765" cy="404" r="1.3" fill="#2a2a9a"/>
<path d="M635 406 H656.4 M635 410 H656.4 M635 413 H656.4" fill="none" stroke="#b03030" stroke-width="1"/>
<path d="M635 406 V423 H687 V416" fill="none" stroke="#b03030" stroke-width="1.1"/>
<path d="M678.6 410 H695" fill="none" stroke="#2f8f2f" stroke-width="1.1"/>
<path d="M695 405.5 V414.5 L699 410 Z" fill="#2f8f2f"/>
<path d="M687 423 H708 V450 M693 423 V430 M693 443 V448 H708" fill="none" stroke="#b03030" stroke-width="1.1"/>
<rect x="692.5" y="429" width="5" height="13" fill="#fff" stroke="#2f8f2f" stroke-width="1.1"/>
<path d="M704 437 H712 M704 440 H712" fill="none" stroke="#2f8f2f" stroke-width="1.1"/>
<path d="M708 450 V452" fill="none" stroke="#2f8f2f" stroke-width="1.2"/>
<path d="M703.5 452 H712.5 L708 456 Z" fill="#2f8f2f"/>
<text x="719" y="394" font-family="Liberation Mono" font-size="3.5" fill="#2a2a9a">R105</text>
<text x="732" y="394" font-family="Liberation Mono" font-size="3.5" fill="#2a2a9a">L_USB_DM</text>
<text x="680" y="432" font-family="Liberation Mono" font-size="3.5" fill="#2a2a9a">R106</text>
<text x="712" y="436" font-family="Liberation Mono" font-size="3.5" fill="#2a2a9a">C104</text>
<text x="712" y="441" font-family="Liberation Mono" font-size="3.5" fill="#2a2a9a">50V/10uF</text>
<circle cx="696" cy="530" r="1.9" fill="#fff" stroke="#2f8f2f" stroke-width="1.1"/>
<path d="M696 532 V553" fill="none" stroke="#b03030" stroke-width="1.2"/>
<path d="M696 532 V540" fill="none" stroke="#2f8f2f" stroke-width="1.2"/>
<rect x="693.5" y="553" width="5" height="14" fill="#fff" stroke="#2f8f2f" stroke-width="1.1"/>
<path d="M696 567 V587" fill="none" stroke="#b03030" stroke-width="1.2"/>
<path d="M696 576 H738" fill="none" stroke="#b03030" stroke-width="1.2"/>
<circle cx="738" cy="576" r="1.3" fill="#2a2a9a"/>
<circle cx="696" cy="576" r="1.1" fill="#2f8f2f"/>
<path d="M690 587 H702 M690 590 H702" fill="none" stroke="#2f8f2f" stroke-width="1.1"/>
<path d="M696 590 V610" fill="none" stroke="#b03030" stroke-width="1.2"/>
<path d="M696 600 V610" fill="none" stroke="#2f8f2f" stroke-width="1.2"/>
<path d="M691.5 610 H700.5 L696 614 Z" fill="#2f8f2f"/>
<text x="695" y="527" font-family="Liberation Mono" font-size="3.5" fill="#2a2a9a">+3V3</text>
<text x="700" y="541" font-family="Liberation Mono" font-size="3.5" fill="#2a2a9a">3V3</text>
<text x="700" y="558" font-family="Liberation Mono" font-size="3.5" fill="#2a2a9a">R102</text>
<text x="700" y="562" font-family="Liberation Mono" font-size="3.5" fill="#2a2a9a">10K</text>
<text x="720" y="574" font-family="Liberation Mono" font-size="3.5" fill="#2a2a9a">L_NRST</text>
<text x="700" y="585" font-family="Liberation Mono" font-size="3.5" fill="#2a2a9a">C103</text>
<text x="700" y="590" font-family="Liberation Mono" font-size="3.5" fill="#2a2a9a">50V/0.1uF</text>
<rect x="986.8" y="204.9" width="85" height="158.4" fill="none" stroke="#41dcef" stroke-width="1.8"/>
<path d="M977 209.0 H987" fill="none" stroke="#41dcef" stroke-width="1.4"/>
<path d="M977 213.4 H987" fill="none" stroke="#41dcef" stroke-width="1.4"/>
<path d="M977 217.7 H987" fill="none" stroke="#41dcef" stroke-width="1.4"/>
<path d="M977 222.0 H987" fill="none" stroke="#41dcef" stroke-width="1.4"/>
<path d="M977 226.3 H987" fill="none" stroke="#41dcef" stroke-width="1.4"/>
<path d="M977 230.6 H987" fill="none" stroke="#41dcef" stroke-width="1.4"/>
<path d="M977 234.8 H987" fill="none" stroke="#41dcef" stroke-width="1.4"/>
<path d="M977 239.1 H987" fill="none" stroke="#41dcef" stroke-width="1.4"/>
<path d="M977 243.5 H987" fill="none" stroke="#41dcef" stroke-width="1.4"/>
<path d="M977 252.0 H987" fill="none" stroke="#41dcef" stroke-width="1.4"/>
<path d="M977 256.4 H987" fill="none" stroke="#41dcef" stroke-width="1.4"/>
<path d="M977 260.7 H987" fill="none" stroke="#41dcef" stroke-width="1.4"/>
<path d="M977 264.9 H987" fill="none" stroke="#41dcef" stroke-width="1.4"/>
<path d="M977 269.2 H987" fill="none" stroke="#41dcef" stroke-width="1.4"/>
<path d="M977 273.4 H987" fill="none" stroke="#41dcef" stroke-width="1.4"/>
<path d="M977 277.8 H987" fill="none" stroke="#41dcef" stroke-width="1.4"/>
<path d="M977 282.1 H987" fill="none" stroke="#41dcef" stroke-width="1.4"/>
<path d="M977 295.0 H987" fill="none" stroke="#41dcef" stroke-width="1.4"/>
<path d="M977 299.0 H987" fill="none" stroke="#41dcef" stroke-width="1.4"/>
<path d="M977 311.8 H987" fill="none" stroke="#41dcef" stroke-width="1.4"/>
<path d="M977 320.3 H987" fill="none" stroke="#41dcef" stroke-width="1.4"/>
<path d="M977 328.7 H987" fill="none" stroke="#41dcef" stroke-width="1.4"/>
<path d="M977 337.6 H987" fill="none" stroke="#41dcef" stroke-width="1.4"/>
<path d="M977 341.5 H987" fill="none" stroke="#41dcef" stroke-width="1.4"/>
<path d="M977 345.8 H987" fill="none" stroke="#41dcef" stroke-width="1.4"/>
<path d="M977 358.3 H987" fill="none" stroke="#41dcef" stroke-width="1.4"/>
<path d="M1072 209 H1080.5" fill="none" stroke="#41dcef" stroke-width="1.4"/>
<path d="M1072 213.4 H1080.5" fill="none" stroke="#41dcef" stroke-width="1.4"/>
<path d="M1072 217.7 H1080.5" fill="none" stroke="#41dcef" stroke-width="1.4"/>
<path d="M1072 222 H1080.5" fill="none" stroke="#41dcef" stroke-width="1.4"/>
<path d="M1072 226.3 H1080.5" fill="none" stroke="#41dcef" stroke-width="1.4"/>
<path d="M1072 230.6 H1080.5" fill="none" stroke="#41dcef" stroke-width="1.4"/>
<path d="M1072 234.8 H1080.5" fill="none" stroke="#41dcef" stroke-width="1.4"/>
<path d="M1072 239.1 H1080.5" fill="none" stroke="#41dcef" stroke-width="1.4"/>
<path d="M1072 256.4 H1080.5" fill="none" stroke="#41dcef" stroke-width="1.4"/>
<path d="M1072 260.7 H1080.5" fill="none" stroke="#41dcef" stroke-width="1.4"/>
<path d="M1072 264.9 H1080.5" fill="none" stroke="#41dcef" stroke-width="1.4"/>
<path d="M1072 269.2 H1080.5" fill="none" stroke="#41dcef" stroke-width="1.4"/>
<path d="M1072 273.4 H1080.5" fill="none" stroke="#41dcef" stroke-width="1.4"/>
<path d="M1072 277.8 H1080.5" fill="none" stroke="#41dcef" stroke-width="1.4"/>
<path d="M1072 282.1 H1080.5" fill="none" stroke="#41dcef" stroke-width="1.4"/>
<path d="M1072 295 H1080.5" fill="none" stroke="#41dcef" stroke-width="1.4"/>
<path d="M1072 299 H1080.5" fill="none" stroke="#41dcef" stroke-width="1.4"/>
<path d="M1072 303.4 H1080.5" fill="none" stroke="#41dcef" stroke-width="1.4"/>
<path d="M1072 337.6 H1080.5" fill="none" stroke="#41dcef" stroke-width="1.4"/>
<path d="M1072 341.5 H1080.5" fill="none" stroke="#41dcef" stroke-width="1.4"/>
<path d="M1072 345.8 H1080.5" fill="none" stroke="#41dcef" stroke-width="1.4"/>
<path d="M1072 358.3 H1080.5" fill="none" stroke="#41dcef" stroke-width="1.4"/>
<path d="M990 209.0 H1004" fill="none" stroke="#9beaf5" stroke-width="1.0"/>
<path d="M990 213.4 H1004" fill="none" stroke="#9beaf5" stroke-width="1.0"/>
<path d="M990 217.7 H1004" fill="none" stroke="#9beaf5" stroke-width="1.0"/>
<path d="M990 222.0 H1004" fill="none" stroke="#9beaf5" stroke-width="1.0"/>
<path d="M990 226.3 H1004" fill="none" stroke="#9beaf5" stroke-width="1.0"/>
<path d="M990 230.6 H1004" fill="none" stroke="#9beaf5" stroke-width="1.0"/>
<path d="M990 234.8 H1004" fill="none" stroke="#9beaf5" stroke-width="1.0"/>
<path d="M990 239.1 H1004" fill="none" stroke="#9beaf5" stroke-width="1.0"/>
<path d="M990 243.5 H1004" fill="none" stroke="#9beaf5" stroke-width="1.0"/>
<path d="M990 252.0 H1004" fill="none" stroke="#9beaf5" stroke-width="1.0"/>
<path d="M990 256.4 H1004" fill="none" stroke="#9beaf5" stroke-width="1.0"/>
<path d="M990 260.7 H1004" fill="none" stroke="#9beaf5" stroke-width="1.0"/>
<path d="M990 264.9 H1004" fill="none" stroke="#9beaf5" stroke-width="1.0"/>
<path d="M990 269.2 H1004" fill="none" stroke="#9beaf5" stroke-width="1.0"/>
<path d="M990 273.4 H1004" fill="none" stroke="#9beaf5" stroke-width="1.0"/>
<path d="M990 277.8 H1004" fill="none" stroke="#9beaf5" stroke-width="1.0"/>
<path d="M990 282.1 H1004" fill="none" stroke="#9beaf5" stroke-width="1.0"/>
<path d="M990 295.0 H1004" fill="none" stroke="#9beaf5" stroke-width="1.0"/>
<path d="M990 299.0 H1004" fill="none" stroke="#9beaf5" stroke-width="1.0"/>
<path d="M990 311.8 H1004" fill="none" stroke="#9beaf5" stroke-width="1.0"/>
<path d="M990 320.3 H1004" fill="none" stroke="#9beaf5" stroke-width="1.0"/>
<path d="M990 328.7 H1004" fill="none" stroke="#9beaf5" stroke-width="1.0"/>
<path d="M990 337.6 H1004" fill="none" stroke="#9beaf5" stroke-width="1.0"/>
<path d="M990 341.5 H1004" fill="none" stroke="#9beaf5" stroke-width="1.0"/>
<path d="M990 345.8 H1004" fill="none" stroke="#9beaf5" stroke-width="1.0"/>
<path d="M990 358.3 H1004" fill="none" stroke="#9beaf5" stroke-width="1.0"/>
<path d="M1052 209 H1068" fill="none" stroke="#9beaf5" stroke-width="1.0"/>
<path d="M1052 213.4 H1068" fill="none" stroke="#9beaf5" stroke-width="1.0"/>
<path d="M1052 217.7 H1068" fill="none" stroke="#9beaf5" stroke-width="1.0"/>
<path d="M1052 222 H1068" fill="none" stroke="#9beaf5" stroke-width="1.0"/>
<path d="M1052 226.3 H1068" fill="none" stroke="#9beaf5" stroke-width="1.0"/>
<path d="M1052 230.6 H1068" fill="none" stroke="#9beaf5" stroke-width="1.0"/>
<path d="M1052 234.8 H1068" fill="none" stroke="#9beaf5" stroke-width="1.0"/>
<path d="M1052 239.1 H1068" fill="none" stroke="#9beaf5" stroke-width="1.0"/>
<path d="M1052 256.4 H1068" fill="none" stroke="#9beaf5" stroke-width="1.0"/>
<path d="M1052 260.7 H1068" fill="none" stroke="#9beaf5" stroke-width="1.0"/>
<path d="M1052 264.9 H1068" fill="none" stroke="#9beaf5" stroke-width="1.0"/>
<path d="M1052 269.2 H1068" fill="none" stroke="#9beaf5" stroke-width="1.0"/>
<path d="M1052 273.4 H1068" fill="none" stroke="#9beaf5" stroke-width="1.0"/>
<path d="M1052 277.8 H1068" fill="none" stroke="#9beaf5" stroke-width="1.0"/>
<path d="M1052 282.1 H1068" fill="none" stroke="#9beaf5" stroke-width="1.0"/>
<path d="M1052 295 H1068" fill="none" stroke="#9beaf5" stroke-width="1.0"/>
<path d="M1052 299 H1068" fill="none" stroke="#9beaf5" stroke-width="1.0"/>
<path d="M1052 303.4 H1068" fill="none" stroke="#9beaf5" stroke-width="1.0"/>
<path d="M1052 337.6 H1068" fill="none" stroke="#9beaf5" stroke-width="1.0"/>
<path d="M1052 341.5 H1068" fill="none" stroke="#9beaf5" stroke-width="1.0"/>
<path d="M1052 345.8 H1068" fill="none" stroke="#9beaf5" stroke-width="1.0"/>
<path d="M1052 358.3 H1068" fill="none" stroke="#9beaf5" stroke-width="1.0"/>
<path d="M987 204 L1029.7 284 L987 367" fill="none" stroke="#2a3a8a" stroke-width="1.3"/>
<circle cx="977.5" cy="209.0" r="0.9" fill="#26268a"/><circle cx="977.5" cy="213.4" r="0.9" fill="#26268a"/><circle cx="977.5" cy="217.7" r="0.9" fill="#26268a"/><circle cx="977.5" cy="222.0" r="0.9" fill="#26268a"/><circle cx="977.5" cy="226.3" r="0.9" fill="#26268a"/><circle cx="977.5" cy="230.6" r="0.9" fill="#26268a"/><circle cx="977.5" cy="234.8" r="0.9" fill="#26268a"/><circle cx="977.5" cy="239.1" r="0.9" fill="#26268a"/><circle cx="977.5" cy="243.5" r="0.9" fill="#26268a"/><circle cx="977.5" cy="252.0" r="0.9" fill="#26268a"/><circle cx="977.5" cy="256.4" r="0.9" fill="#26268a"/><circle cx="977.5" cy="260.7" r="0.9" fill="#26268a"/><circle cx="977.5" cy="264.9" r="0.9" fill="#26268a"/><circle cx="977.5" cy="269.2" r="0.9" fill="#26268a"/><circle cx="977.5" cy="273.4" r="0.9" fill="#26268a"/><circle cx="977.5" cy="277.8" r="0.9" fill="#26268a"/><circle cx="977.5" cy="282.1" r="0.9" fill="#26268a"/><circle cx="977.5" cy="295.0" r="0.9" fill="#26268a"/><circle cx="977.5" cy="299.0" r="0.9" fill="#26268a"/><circle cx="977.5" cy="311.8" r="0.9" fill="#26268a"/><circle cx="977.5" cy="320.3" r="0.9" fill="#26268a"/><circle cx="977.5" cy="328.7" r="0.9" fill="#26268a"/><circle cx="977.5" cy="337.6" r="0.9" fill="#26268a"/><circle cx="977.5" cy="341.5" r="0.9" fill="#26268a"/><circle cx="977.5" cy="345.8" r="0.9" fill="#26268a"/><circle cx="977.5" cy="358.3" r="0.9" fill="#26268a"/><circle cx="1080.5" cy="209" r="0.9" fill="#26268a"/><circle cx="1080.5" cy="213.4" r="0.9" fill="#26268a"/><circle cx="1080.5" cy="217.7" r="0.9" fill="#26268a"/><circle cx="1080.5" cy="222" r="0.9" fill="#26268a"/><circle cx="1080.5" cy="226.3" r="0.9" fill="#26268a"/><circle cx="1080.5" cy="230.6" r="0.9" fill="#26268a"/><circle cx="1080.5" cy="234.8" r="0.9" fill="#26268a"/><circle cx="1080.5" cy="239.1" r="0.9" fill="#26268a"/><circle cx="1080.5" cy="256.4" r="0.9" fill="#26268a"/><circle cx="1080.5" cy="260.7" r="0.9" fill="#26268a"/><circle cx="1080.5" cy="264.9" r="0.9" fill="#26268a"/><circle cx="1080.5" cy="269.2" r="0.9" fill="#26268a"/><circle cx="1080.5" cy="273.4" r="0.9" fill="#26268a"/><circle cx="1080.5" cy="277.8" r="0.9" fill="#26268a"/><circle cx="1080.5" cy="282.1" r="0.9" fill="#26268a"/><circle cx="1080.5" cy="295" r="0.9" fill="#26268a"/><circle cx="1080.5" cy="299" r="0.9" fill="#26268a"/><circle cx="1080.5" cy="303.4" r="0.9" fill="#26268a"/><circle cx="1080.5" cy="337.6" r="0.9" fill="#26268a"/><circle cx="1080.5" cy="341.5" r="0.9" fill="#26268a"/><circle cx="1080.5" cy="345.8" r="0.9" fill="#26268a"/><circle cx="1080.5" cy="358.3" r="0.9" fill="#26268a"/><path d="M987 204 L1029.7 284 L987 367" fill="none" stroke="#fff" stroke-width="1.5" stroke-dasharray="3 2.2" stroke-dashoffset="3"/>
<path d="M934.7 226.3 H977" fill="none" stroke="#b03030" stroke-width="1.2"/>
<circle cx="934.7" cy="226.3" r="1.3" fill="#2a2a9a"/>
<path d="M934.7 230.6 H977" fill="none" stroke="#b03030" stroke-width="1.2"/>
<circle cx="934.7" cy="230.6" r="1.3" fill="#2a2a9a"/>
<path d="M934.7 234.8 H977" fill="none" stroke="#b03030" stroke-width="1.2"/>
<circle cx="934.7" cy="234.8" r="1.3" fill="#2a2a9a"/>
<path d="M934.7 239.1 H977" fill="none" stroke="#b03030" stroke-width="1.2"/>
<circle cx="934.7" cy="239.1" r="1.3" fill="#2a2a9a"/>
<path d="M934.7 252.0 H977" fill="none" stroke="#b03030" stroke-width="1.2"/>
<circle cx="934.7" cy="252.0" r="1.3" fill="#2a2a9a"/>
<path d="M934.7 264.9 H977" fill="none" stroke="#b03030" stroke-width="1.2"/>
<circle cx="934.7" cy="264.9" r="1.3" fill="#2a2a9a"/>
<path d="M934.7 269.2 H977" fill="none" stroke="#b03030" stroke-width="1.2"/>
<circle cx="934.7" cy="269.2" r="1.3" fill="#2a2a9a"/>
<path d="M934.7 273.4 H977" fill="none" stroke="#b03030" stroke-width="1.2"/>
<circle cx="934.7" cy="273.4" r="1.3" fill="#2a2a9a"/>
<path d="M934.7 277.8 H977" fill="none" stroke="#b03030" stroke-width="1.2"/>
<circle cx="934.7" cy="277.8" r="1.3" fill="#2a2a9a"/>
<path d="M934.7 295.0 H977" fill="none" stroke="#b03030" stroke-width="1.2"/>
<circle cx="934.7" cy="295.0" r="1.3" fill="#2a2a9a"/>
<path d="M934.7 299.0 H977" fill="none" stroke="#b03030" stroke-width="1.2"/>
<circle cx="934.7" cy="299.0" r="1.3" fill="#2a2a9a"/>
<path d="M934.7 320.3 H977" fill="none" stroke="#b03030" stroke-width="1.2"/>
<circle cx="934.7" cy="320.3" r="1.3" fill="#2a2a9a"/>
<text x="939" y="225.5" font-family="Liberation Mono" font-size="3.5" fill="#2a2a9a">PA1</text>
<text x="939" y="229.79999999999998" font-family="Liberation Mono" font-size="3.5" fill="#2a2a9a">PA1</text>
<text x="939" y="234.0" font-family="Liberation Mono" font-size="3.5" fill="#2a2a9a">PA1</text>
<text x="939" y="238.29999999999998" font-family="Liberation Mono" font-size="3.5" fill="#2a2a9a">PA1</text>
<text x="939" y="251" font-family="Liberation Mono" font-size="3.5" fill="#2a2a9a">L_USB_CTR</text>
<text x="939" y="264" font-family="Liberation Mono" font-size="3.5" fill="#2a2a9a">L_USB_DM</text>
<text x="939" y="294" font-family="Liberation Mono" font-size="3.5" fill="#2a2a9a">L_OSC_IN</text>
<text x="939" y="319" font-family="Liberation Mono" font-size="3.5" fill="#2a2a9a">L_NRST</text>
<path d="M918 311.8 H977" fill="none" stroke="#b03030" stroke-width="1.2"/>
<path d="M922 307.3 V316.3 L918 311.8 Z" fill="#2f8f2f"/>
<rect x="945" y="309.8" width="15" height="4" fill="#fff" stroke="#2f8f2f" stroke-width="1"/>
<circle cx="950" cy="329" r="1.9" fill="#fff" stroke="#2f8f2f" stroke-width="1.1"/>
<path d="M952 328.7 H977 M960.7 328.7 V358.3 H977 M960.7 337.6 H977 M960.7 341.5 H977 M960.7 345.8 H977" fill="none" stroke="#b03030" stroke-width="1.2"/>
<circle cx="960.7" cy="328.7" r="1.2" fill="#2a5a2a"/>
<circle cx="960.7" cy="337.6" r="1.2" fill="#2a5a2a"/>
<circle cx="960.7" cy="341.5" r="1.2" fill="#2a5a2a"/>
<circle cx="960.7" cy="345.8" r="1.2" fill="#2a5a2a"/>
<text x="943" y="337" font-family="Liberation Mono" font-size="3.5" fill="#2a2a9a">+3V3</text>
<path d="M1080.5 256.4 H1136" fill="none" stroke="#b03030" stroke-width="1.2"/>
<circle cx="1136" cy="256.4" r="1.3" fill="#2a2a9a"/>
<text x="1110" y="254.5" font-family="Liberation Mono" font-size="3.5" fill="#2a2a9a">NRST</text>
<path d="M1080.5 269.2 H1125 M1080.5 273.4 H1125" fill="none" stroke="#b03030" stroke-width="1.2"/>
<rect x="1125" y="267" width="13" height="4" fill="#fff" stroke="#2f8f2f" stroke-width="1"/>
<rect x="1125" y="271.5" width="13" height="4" fill="#fff" stroke="#2f8f2f" stroke-width="1"/>
<path d="M1138 269.2 H1149 V264.9 H1160 M1138 273.4 H1160" fill="none" stroke="#b03030" stroke-width="1.1"/>
<path d="M1149 264.9 H1160 M1149 273.4 H1160" fill="none" stroke="#2f8f2f" stroke-width="1.1"/>
<circle cx="1160" cy="264.9" r="1.5" fill="#2f8f2f"/>
<circle cx="1160" cy="273.4" r="1.5" fill="#2f8f2f"/>
<path d="M1160 264.9 H1183 V273.4 H1160 M1183 269 H1185" fill="none" stroke="#b03030" stroke-width="1.1"/>
<path d="M1185 264.5 V273.5 L1189 269 Z" fill="#2f8f2f"/>
<text x="1094" y="268" font-family="Liberation Mono" font-size="3.5" fill="#2a2a9a">L_LED1</text>
<text x="1163" y="263" font-family="Liberation Mono" font-size="3.5" fill="#2a2a9a">L_LED1</text>
<text x="1163" y="272" font-family="Liberation Mono" font-size="3.5" fill="#2a2a9a">L_LED2</text>
<path d="M1080.5 337.6 H1105 M1089.7 337.6 V358.3 H1080.5 M1080.5 341.5 H1089.7 M1080.5 345.8 H1089.7" fill="none" stroke="#b03030" stroke-width="1.2"/>
<circle cx="1089.7" cy="337.6" r="1.2" fill="#2a5a2a"/>
<circle cx="1089.7" cy="341.5" r="1.2" fill="#2a5a2a"/>
<circle cx="1089.7" cy="345.8" r="1.2" fill="#2a5a2a"/>
<path d="M1100 333.1 V342.1 L1104 337.6 Z" fill="#2f8f2f"/>
<circle cx="952" cy="421" r="1.9" fill="#fff" stroke="#2f8f2f" stroke-width="1.1"/>
<path d="M952 423 V431.4" fill="none" stroke="#2f8f2f" stroke-width="1.2"/>
<path d="M952 431.4 H1042 M952 440.3 H1042" fill="none" stroke="#b03030" stroke-width="1.3"/>
<path d="M947 434.2 H957 M947 437.6 H957" fill="none" stroke="#2f8f2f" stroke-width="1.2"/>
<path d="M977 434.2 H987 M977 437.6 H987" fill="none" stroke="#2f8f2f" stroke-width="1.2"/>
<path d="M1007 434.2 H1017 M1007 437.6 H1017" fill="none" stroke="#2f8f2f" stroke-width="1.2"/>
<path d="M1037 434.2 H1047 M1037 437.6 H1047" fill="none" stroke="#2f8f2f" stroke-width="1.2"/>
<path d="M952 440.3 V451" fill="none" stroke="#2f8f2f" stroke-width="1.2"/>
<path d="M947.5 451 H956.5 L952 455 Z" fill="#2f8f2f"/>
<text x="955" y="433" font-family="Liberation Mono" font-size="3.5" fill="#2a2a9a">C106</text>
<text x="955" y="438.5" font-family="Liberation Mono" font-size="3.5" fill="#2a2a9a">50V/0.1uF</text>
<text x="985" y="433" font-family="Liberation Mono" font-size="3.5" fill="#2a2a9a">C106</text>
<text x="985" y="438.5" font-family="Liberation Mono" font-size="3.5" fill="#2a2a9a">50V/0.1uF</text>
<text x="1015" y="433" font-family="Liberation Mono" font-size="3.5" fill="#2a2a9a">C106</text>
<text x="1015" y="438.5" font-family="Liberation Mono" font-size="3.5" fill="#2a2a9a">50V/0.1uF</text>
<text x="1045" y="433" font-family="Liberation Mono" font-size="3.5" fill="#2a2a9a">C106</text>
<text x="1045" y="438.5" font-family="Liberation Mono" font-size="3.5" fill="#2a2a9a">50V/0.1uF</text>
<text x="949" y="419" font-family="Liberation Mono" font-size="3.5" fill="#2a2a9a">+3V3</text>
<text x="948" y="460" font-family="Liberation Mono" font-size="3.5" fill="#2f8f2f">GND</text>
</svg>
<svg class="a" style="left:359px;top:101px" width="1549" height="519" viewBox="359 101 1549 519">
<g fill="none" stroke="#2f8f2f" stroke-width="1.3">
<path d="M1021.3 551.3 H1317 M1021.3 560 H1317 M1021.3 568.3 H1317 M1021.3 577 H1317 M1021.3 585.5 H1119.2 M1021.3 593.3 H1119.2 M1021.3 602.5 H1317 M1021.3 610.5 H1317 M1021.3 619.7 H1317"/>
<path d="M1021.3 551.3 V640 M1056.3 551.3 V640 M1119.2 551.3 V640 M1153.7 551.3 V577 M1153.7 602.5 V640 M1214.7 551.3 V640 M1248.7 551.3 V577"/>
</g>
<text x="1022" y="547.5" font-family="Liberation Mono" fill="#2a2a6a" font-size="5.3" textLength="183">The type and specification of the components refer to the BOM</text>
<text x="1123" y="593" font-family="Liberation Mono" fill="#2a2a6a" font-size="8">GND32</text>
<text x="1218" y="593" font-family="Liberation Mono" fill="#2a2a6a" font-size="8">00001234</text>
<text x="1227" y="566" font-family="Liberation Mono" fill="#2a2a6a" font-size="5.5">NA</text>
<text x="1218" y="574.5" font-family="Liberation Mono" fill="#2a2a6a" font-size="5.5">ECA NO</text>
<text x="1272" y="574.5" font-family="Liberation Mono" fill="#2a2a6a" font-size="5.5">DATE</text>
<text x="1128" y="608.5" font-family="Liberation Mono" fill="#2a2a6a" font-size="5.5">VER</text>
<text x="1158" y="608.5" font-family="Liberation Mono" fill="#2a2a6a" font-size="5.5">PART_NUMBER</text>
<text x="1224" y="608.5" font-family="Liberation Mono" fill="#2a2a6a" font-size="5.5">SHEET   1   OF   5</text>
<text x="1026" y="582.5" font-family="Liberation Mono" fill="#888" font-size="4.5">DESIGNED</text>
<text x="1026" y="599" font-family="Liberation Mono" fill="#888" font-size="4.5">REVIEWED</text>
<text x="1060" y="582.5" font-family="Liberation Mono" fill="#8890cc" font-size="4.5">Yuan</text>
<text x="1060" y="599" font-family="Liberation Mono" fill="#8890cc" font-size="4.5">Yuan</text>
<text x="1136" y="620" font-family="Liberation Mono" fill="#2a2a6a" font-size="5.5">A</text><text x="1156" y="620" font-family="Liberation Mono" fill="#2a2a6a" font-size="5.5">XXXX</text>
</svg>
<div id="bp" class="a"></div>
<div class="a" style="left:4px;top:628px;width:1px;height:283px;background:#ececec"></div><div class="a" style="left:4px;top:889px;width:12px;height:22px;background:#efefef;border-radius:0 0 0 6px"></div>
<div class="a" style="left:4px;top:627px;width:1912px;height:2px;background:#efefef"></div><div class="a" style="left:932.5px;top:620px;width:56px;height:7px;background:#f2f2f2;border:1px solid #7a7a7a"></div>
<svg class="a" style="left:955px;top:620px" width="14" height="7"><path d="M2 1 H12 L7 5.5 Z" fill="#555"/></svg>

<!-- row1 -->
<div class="a t14" style="left:16px;top:641px;line-height:22px;color:#333">来源</div>
<div class="a dd" style="left:52px;top:640px;width:186px">全部</div>
<svg class="a" style="left:0;top:630px" width="1920" height="120" viewBox="0 630 1920 120">
<g fill="none" stroke="#4a9be6" stroke-width="1.6" stroke-linecap="round">
<path d="M216.5 648 L222 653.5 L227.5 648"/>
<path d="M229.5 687 L235 692.5 L240.5 687"/>
<path d="M475 687 L480.5 692.5 L486 687"/>
<path d="M707 687 L712.5 692.5 L718 687"/>
<path d="M925 687 L930.5 692.5 L936 687"/>
<path d="M1047 687 L1052.5 692.5 L1058 687"/>
</g>
<g fill="none" stroke="#3d8fe0" stroke-width="2" stroke-linecap="round">
<path d="M254.6 655 A8.2 8.2 0 0 1 266.5 644.8"/>
<path d="M269.6 648.2 A8.2 8.2 0 0 1 257.5 658.4"/>
</g>
<path d="M264.3 642.6 L270.6 644.6 L266.6 649.4 Z" fill="#3d8fe0"/>
<path d="M259.8 660.6 L253.5 658.6 L257.5 653.8 Z" fill="#3d8fe0"/>
<path d="M16 669.5 H286.5 V643.5 H617.5 V669.5 H1555" fill="none" stroke="#e3e3e3"/>
<rect x="386" y="643.5" width="231.5" height="26" fill="#eeeeee" stroke="#e0e0e0"/>
<path d="M486.5 643.5 V669.5" stroke="#dcdcdc"/>
<g fill="none" stroke="#3d8fe0" stroke-width="1.5"><circle cx="1445.5" cy="650.5" r="6"/><path d="M1450 655 L1453 658"/></g>
</svg>
<div class="a" style="left:287px;top:644px;width:99px;text-align:center;font-size:16px;line-height:25px;color:#2d8ae2;font-weight:bold">部件</div>
<div class="a" style="left:386px;top:644px;width:100px;text-align:center;font-size:16px;line-height:25px;color:#333">CBB</div>
<div class="a" style="left:486px;top:644px;width:131px;text-align:center;font-size:16px;line-height:25px;color:#333">特殊符号</div>
<div class="a t14" style="left:1228px;top:641px;line-height:22px">按编码查找</div>
<div class="a" style="left:1296px;top:640px;width:167px;height:24px;border:1px solid #dcdcdc;border-radius:2px;background:#fff"></div>
<svg class="a" style="left:1436px;top:643px" width="20" height="20"><g fill="none" stroke="#3d8fe0" stroke-width="1.5"><circle cx="9.5" cy="8" r="6"/><path d="M14 12.5 L17 15.5"/></g></svg>
<div class="a" style="left:1474px;top:640px;width:78px;height:24px;border:1px solid #dcdcdc;border-radius:2px;background:#fff;text-align:center;font-size:14px;line-height:22px;color:#3d8fe0">器件图谱</div>
<div class="a" style="left:1562px;top:636px;width:225px;height:31px;border:1px solid #e2e2e2;border-radius:2px;background:#f8f8f8;text-align:center;font-size:15px;line-height:31px;color:#9a9a9a">放置</div>
<div class="a" style="left:1880px;top:636px;width:31px;height:31px;border-radius:3px;background:#1e8cfa;text-align:center;font-size:15px;line-height:33px;color:#fff;font-weight:bold">S</div>
<div class="a" style="left:1562px;top:673px;width:349px;height:174px;background:#cccccc"></div>
<div class="a" style="left:1562px;top:853px;width:20px;height:29px;border:1px solid #e2e2e2;background:#fff"></div>
<!-- row2 -->
<div class="a t14" style="left:16px;top:680px;line-height:22px">器件类别</div>
<div class="a dd" style="left:65px;top:679px;width:186px">全部</div>
<div class="a t14" style="left:261px;top:680px;line-height:22px">适用产品</div>
<div class="a dd" style="left:324.5px;top:679px;width:172px">所有</div>
<div class="a t14" style="left:506px;top:680px;line-height:22px">产品线</div>
<div class="a dd" style="left:556px;top:679px;width:172px">集团级</div>
<div class="a t14" style="left:738px;top:680px;line-height:22px">属性</div>
<div class="a dd" style="left:774.5px;top:679px;width:172px">编码</div>
<div class="a t14" style="left:956px;top:680px;line-height:22px">值</div>
<div class="a dd" style="left:979px;top:679px;width:89px">模糊</div>
<div class="a dd" style="left:1068px;top:679px;width:170px;color:#bdbdbd">请输入关键词</div>
<!-- re-draw chevrons above dropdowns -->
<svg class="a" style="left:0;top:630px" width="1920" height="80" viewBox="0 630 1920 80">
<g fill="none" stroke="#4a9be6" stroke-width="1.6" stroke-linecap="round">
<path d="M216.5 647.5 L222 653 L227.5 647.5"/>
<path d="M230 686.5 L235.5 692 L241 686.5"/>
<path d="M475.5 686.5 L481 692 L486.5 686.5"/>
<path d="M707.5 686.5 L713 692 L718.5 686.5"/>
<path d="M925.5 686.5 L931 692 L936.5 686.5"/>
<path d="M1047.5 686.5 L1053 692 L1058.5 686.5"/>
</g></svg>
<!-- row3 -->
<div class="a" style="left:20px;top:712.5px;width:81px;height:26.5px;background:#1e8cfa;border-radius:2px;text-align:center;color:#fff;font-size:14px;line-height:26px">搜索</div>
<div class="a" style="left:110px;top:712.5px;width:81px;height:26.5px;border:1px solid #dedede;border-radius:2px;text-align:center;color:#3d8fe0;font-size:14px;line-height:24px">高级搜索</div>
<div class="a t14" style="left:200px;top:714px;line-height:22px;color:#3d8fe0">重置</div>
<div class="a t14" style="left:1340px;top:698px;line-height:22px">本页数量: 0</div>
<div class="a" style="left:1424px;top:699px;width:20.5px;height:20px;border:1px solid #e2e2e2;border-radius:2px"></div>
<div class="a" style="left:1497px;top:699px;width:20.5px;height:20px;border:1px solid #e2e2e2;border-radius:2px"></div>
<svg class="a" style="left:1424px;top:699px" width="94" height="20"><path d="M12 6.5 L9 10 L12 13.5" fill="none" stroke="#aaa" stroke-width="1.1"/><path d="M82 6.5 L85 10 L82 13.5" fill="none" stroke="#aaa" stroke-width="1.1"/></svg>
<div class="a t14" style="left:1456px;top:698px;line-height:22px;word-spacing:2px">0 &nbsp;/ 0</div>
<!-- table header -->
<div class="a" style="left:16px;top:748px;width:1540px;height:27px;background:#f2f2f2;border-bottom:1px solid #e6e6e6"></div>
<svg class="a" style="left:0;top:748px" width="1920" height="28" viewBox="0 748 1920 28">
<g fill="#e4e4e4"><rect x="70" y="749" width="1" height="26"/><rect x="190" y="749" width="1" height="26"/><rect x="335" y="749" width="1" height="26"/><rect x="455" y="749" width="1" height="26"/><rect x="591" y="749" width="1" height="26"/><rect x="710" y="749" width="1" height="26"/><rect x="806.5" y="749" width="1" height="26"/><rect x="903" y="749" width="1" height="26"/><rect x="1021.5" y="749" width="1" height="26"/><rect x="1140.5" y="749" width="1" height="26"/><rect x="1231.5" y="749" width="1" height="26"/><rect x="1350" y="749" width="1" height="26"/><rect x="1445.5" y="749" width="1" height="26"/></g>
<g fill="none" stroke="#aaa" stroke-width="1.1" id="srt">
<path d="M173 758.5 L177 754.5 L181 758.5 M173 765.5 L177 769.5 L181 765.5"/>
<path d="M438 758.5 L442 754.5 L446 758.5 M438 765.5 L442 769.5 L446 765.5"/>
<path d="M574 758.5 L578 754.5 L582 758.5 M574 765.5 L578 769.5 L582 765.5"/>
<path d="M693 758.5 L697 754.5 L701 758.5 M693 765.5 L697 769.5 L701 765.5"/>
<path d="M789 758.5 L793 754.5 L797 758.5 M789 765.5 L793 769.5 L797 765.5"/>
<path d="M1123.7 758.5 L1127.7 754.5 L1131.7 758.5 M1123.7 765.5 L1127.7 769.5 L1131.7 765.5"/>
<path d="M1215 758.5 L1219 754.5 L1223 758.5 M1215 765.5 L1219 769.5 L1223 765.5"/>
<path d="M1333.6 758.5 L1337.6 754.5 L1341.6 758.5 M1333.6 765.5 L1337.6 769.5 L1341.6 765.5"/>
<path d="M1431 758.5 L1435 754.5 L1439 758.5 M1431 765.5 L1435 769.5 L1439 765.5"/>
</g></svg>
<div class="a th" style="left:26px;top:748px">No.</div>
<div class="a th" style="left:80px;top:748px">编码</div>
<div class="a th" style="left:200px;top:748px">描述</div>
<div class="a th" style="left:344px;top:748px">小类名称</div>
<div class="a th" style="left:465px;top:748px">封装</div>
<div class="a th" style="left:600px;top:748px">器件高度</div>
<div class="a th" style="left:720px;top:748px">值</div>
<div class="a th" style="left:816px;top:748px">厂家名称</div>
<div class="a th" style="left:912px;top:748px">厂家型号</div>
<div class="a th" style="left:1031px;top:748px">高度来源</div>
<div class="a th" style="left:1150px;top:748px">场景</div>
<div class="a th" style="left:1241px;top:748px">SYMBOL</div>
<div class="a th" style="left:1360px;top:748px">PDM状态</div>
<div class="a th" style="left:1457px;top:748px">公司优选等级</div>
<div class="a th" style="left:1552px;top:746px;color:#bbb">:</div>
<!-- table body border -->
<div class="a" style="left:16px;top:775px;width:1px;height:113px;background:#e6e6e6"></div>
<div class="a" style="left:1547px;top:776px;width:8px;height:105px;background:#c9c9c9;border-radius:4px"></div>
<!-- empty state -->
<svg class="a" style="left:700px;top:775px" width="160" height="100" viewBox="700 775 160 100">
<g fill="none" stroke="#c4c4c4" stroke-width="1">
<circle cx="829.5" cy="781.3" r="2"/>
<path d="M745 799 V793.5 Q745 792.5 746 792.5 H825 Q826.3 792.5 826.3 794 V850.5 Q826.3 852 825 852 H819.5"/>
<path d="M722.5 813.8 H737"/>
<rect x="737.3" y="799.4" width="82" height="59" rx="1" fill="#fff"/>
<path d="M737.3 806.8 H819.3 M819.3 858.5 H832 M835 858.5 H843.5"/>
<circle cx="771.9" cy="831.9" r="16.3" fill="#fff" stroke-width="1.2"/><circle cx="771.9" cy="831.9" r="12.6" stroke-width="1.2"/>
<path d="M783.5 843.5 L789.5 849.5"/>
<path d="M788.5 850.5 L791.5 847.5 L804 860 Q805 861.5 803.5 863 L802 864.3 Q800.5 865.5 799 864 Z" stroke-width="1.1"/>
<circle cx="730.8" cy="870.6" r="1.5"/>
</g>
<g fill="#c4c4c4"><circle cx="811.2" cy="796.5" r="1"/><circle cx="815.5" cy="796.5" r="1"/><circle cx="819.8" cy="796.5" r="1"/><circle cx="804.5" cy="803.2" r="1"/><circle cx="808.8" cy="803.2" r="1"/><circle cx="813.1" cy="803.2" r="1"/></g>
</svg>
<div class="a" style="left:689.5px;top:870.5px;font-size:13.6px;line-height:20px;color:#9a9a9a;white-space:nowrap;letter-spacing:-0.2px">请点击“刷新”按钮获取最新数据</div>
<!-- bottom tabs -->
<div class="a" style="left:16px;top:888px;width:1561px;height:22.5px;background:#efefef;border-top:1px solid #e0e0e0"></div>
<div class="a" style="left:16px;top:888px;width:115px;height:22px;background:#fff;border-top:1px solid #e0e0e0;border-bottom:2px solid #5a9fe0;text-align:center;font-size:16px;line-height:21px;color:#2d8ae2;font-weight:bold">元件库</div>
<div class="a btab" style="left:131px;top:889px;width:116px">私有库</div>
<div class="a btab" style="left:247px;top:889px;width:100px">日志</div>
<div class="a btab" style="left:347px;top:889px;width:99px">检视</div>
<div class="a btab" style="left:446px;top:889px;width:100px">检查</div>
<div class="a btab" style="left:546px;top:889px;width:131px">批量刷新</div>
<div class="a btab" style="left:677px;top:889px;width:136px">衍生BOM</div>
<div class="a btab" style="left:813px;top:889px;width:136px">配置BOM</div>
<div class="a btab" style="left:949px;top:889px;width:131px">网络调线</div>
<!-- 左键 overlay -->
<div class="a" style="left:65px;top:669px;width:92px;height:46px;background:rgba(88,88,88,0.85);border-radius:4px"></div>
<div class="a" style="left:74px;top:671px;font-family:'Liberation Serif',serif;font-size:37px;line-height:42px;color:#e8e8e8;white-space:nowrap">左键</div>
<!-- info popup -->
<div class="a" style="left:1577px;top:811px;width:338px;height:99px;background:#fff;box-shadow:0 0 6px rgba(0,0,0,0.15);border-radius:0 0 6px 6px"></div>
<div class="a" style="left:1577px;top:811px;width:338px;height:31px;background:#f2f2f2"></div>
<div class="a t14" style="left:1600px;top:816px;line-height:22px;color:#333">信息</div>
<svg class="a" style="left:1874px;top:818px" width="18" height="18"><path d="M2.5 2.5 L14.5 14.5 M14.5 2.5 L2.5 14.5" stroke="#333" stroke-width="1.8"/></svg>
<div class="a t14" style="left:1600px;top:865px;line-height:22px;color:#333">成功保存你的个人偏好!</div>


<!-- TASKBAR -->
<div id="task" class="a"></div>
<div class="a" style="left:280px;top:915px;width:55px;height:44px;background:#3d3d3d"></div>
<div class="a" style="left:172px;top:957px;width:45px;height:2px;background:#7fb0e6"></div>
<div class="a" style="left:229px;top:957px;width:45.5px;height:2px;background:#7fb0e6"></div>
<div class="a" style="left:280px;top:957px;width:55px;height:2px;background:#7fb0e6"></div>
<svg class="a" style="left:0;top:914px" width="1920" height="45" viewBox="0 914 1920 45">
<!-- windows -->
<path d="M18 930 L26 928.8 V937 H18 Z M27.2 928.6 L36.5 927.2 V937 H27.2 Z M18 938.2 H26 V946.2 L18 945 Z M27.2 938.2 H36.5 V948 L27.2 946.6 Z" fill="#fff"/>
<!-- search -->
<circle cx="82.5" cy="934.3" r="7.8" fill="none" stroke="#fff" stroke-width="2.2"/>
<path d="M77 940 L69.5 947.5" stroke="#fff" stroke-width="2.6" stroke-linecap="round"/>
<!-- colorful -->
<g transform="translate(138.4 937.4)"><circle cx="-1.09" cy="-6.20" r="6.7" fill="#e73bd0" opacity="0.92"/><circle cx="4.83" cy="-4.05" r="6.7" fill="#f0303e" opacity="0.92"/><circle cx="5.92" cy="2.15" r="6.7" fill="#f58a1f" opacity="0.92"/><circle cx="1.09" cy="6.20" r="6.7" fill="#f6d21e" opacity="0.92"/><circle cx="-4.83" cy="4.05" r="6.7" fill="#3fd34a" opacity="0.92"/><circle cx="-5.92" cy="-2.15" r="6.7" fill="#22a7f0" opacity="0.92"/><circle r="4.6" fill="#fff" opacity="0.9"/><circle r="6.2" fill="#fff" opacity="0.3"/></g>
<!-- folder -->
<path d="M183 929.5 Q183 927.8 184.7 927.8 H192 L194.5 930 H205.5 Q207 930 207 931.5 V945.5 Q207 947 205.5 947 H184.5 Q183 947 183 945.5 Z" fill="#f6c94e"/>
<path d="M183 932.5 H207 V945.5 Q207 947 205.5 947 H184.5 Q183 947 183 945.5 Z" fill="#fbd971"/>
<path d="M187.5 947 V939 H202.5 V947 H198.5 V942.5 H191.5 V947 Z" fill="#4d9ad8"/>
<!-- wps -->
<path d="M237.5 930 H243.5 L248 940 L251 933.5 H256.5 L259 940 L262.5 930 H265 L259.5 946.5 H255 L252.5 941 L249 946.5 H244 Z" fill="#e53d2f"/>
<path d="M244.5 931.5 L248.5 940.5 L246.5 944 L241 931.5 Z" fill="#1c1c1c" opacity="0.5"/>
<!-- edge -->
<defs><linearGradient id="eg" x1="0" y1="0" x2="1" y2="0.6"><stop offset="0" stop-color="#2aa6e8"/><stop offset="1" stop-color="#5fd16a"/></linearGradient></defs>
<circle cx="307.5" cy="937.5" r="13.8" fill="url(#eg)"/>
<path d="M294 939 Q295 951 308 951.3 Q315.5 951.3 319.5 946 Q313 948.5 307.5 945.5 Q302 942.5 303 937 Q304 932.5 309.5 932 Q300 929.5 295.5 934.5 Q294 936.5 294 939 Z" fill="#1565c0"/>
<path d="M303 937.5 Q303 943 309 945.5 Q315 947.8 320.5 944.5 Q321.3 942 321.3 940 Q319.5 943.5 315 943.5 Q310 943.5 309.5 939 Q309.3 935 311.5 933 Q304 932 303 937.5 Z" fill="#1e88e5"/>
<!-- tray -->
<path d="M1772 941 L1778.5 934.8 L1785 941" fill="none" stroke="#eee" stroke-width="1.2"/>
<g transform="translate(1805.5 937.8)"><circle cx="0.00" cy="-4.60" r="3.2" fill="#f4b9c9"/><circle cx="3.98" cy="-2.30" r="3.2" fill="#f4b9c9"/><circle cx="3.98" cy="2.30" r="3.2" fill="#f4b9c9"/><circle cx="0.00" cy="4.60" r="3.2" fill="#f4b9c9"/><circle cx="-3.98" cy="2.30" r="3.2" fill="#f4b9c9"/><circle cx="-3.98" cy="-2.30" r="3.2" fill="#f4b9c9"/><circle r="4" fill="#f4c6d2"/><circle r="2" fill="#9fb6d8"/></g>
<path d="M1873.8 928.5 H1891.8 V942.5 H1884.8 L1881.5 946 L1878.2 942.5 H1873.8 Z" fill="none" stroke="#f0f0f0" stroke-width="1.3" stroke-linejoin="round"/>
<rect x="1914.5" y="915" width="1" height="44" fill="#666"/>
</svg>
<div class="a" style="left:1826px;top:928px;font-size:13.8px;line-height:20px;color:#fff">ENG</div>



<!-- right splitter handle -->
<div class="a" style="left:1909px;top:318.5px;width:6.5px;height:56.5px;background:#f4f4f4;border:1px solid #8c8c8c;border-radius:1px"></div>
<svg class="a" style="left:1909px;top:340px" width="7" height="12"><path d="M5 2 L1.5 6 L5 10 Z" fill="#777"/></svg>


<!-- AI button -->
<div class="a" style="left:1872px;top:366px;width:44px;height:89px;background:#4b3fd9;border-radius:9px 0 0 9px"></div>
<div class="a" style="left:1872px;top:370.5px;width:44px;text-align:center;color:#fff;font-weight:bold;font-size:12.5px;line-height:26.8px">AI<br>助<br>手</div>
<!-- HAND CURSOR -->
<svg class="a" style="left:585px;top:48px;z-index:50" width="52" height="58" viewBox="585 48 52 58">
<path d="M606 57.5 Q606 52.8 609.5 52.8 Q613 52.8 613 57.5 L613 67.5 Q613.5 64.5 615.8 64.5 Q618.3 64.5 618.6 68.5 Q619.5 66.3 621.6 66.5 Q624.2 66.8 624.3 70.5 Q625.3 68.8 627.3 69.2 Q630.5 69.8 630.5 74 L630.6 88 Q630.5 96.5 625 100.5 L610.5 100.5 Q606 98.5 601 91 L595 83.5 Q592.8 80.5 595 78.8 Q597.5 77.3 600.5 79.8 L606 84.5 Z" fill="#fff" stroke="#1a1a1a" stroke-width="2.2" stroke-linejoin="round"/>
<path d="M613 67.5 V77 M618.6 68.5 V77 M624.3 70.5 V77.5" fill="none" stroke="#1a1a1a" stroke-width="1.6"/>
</svg>
</body></html>
